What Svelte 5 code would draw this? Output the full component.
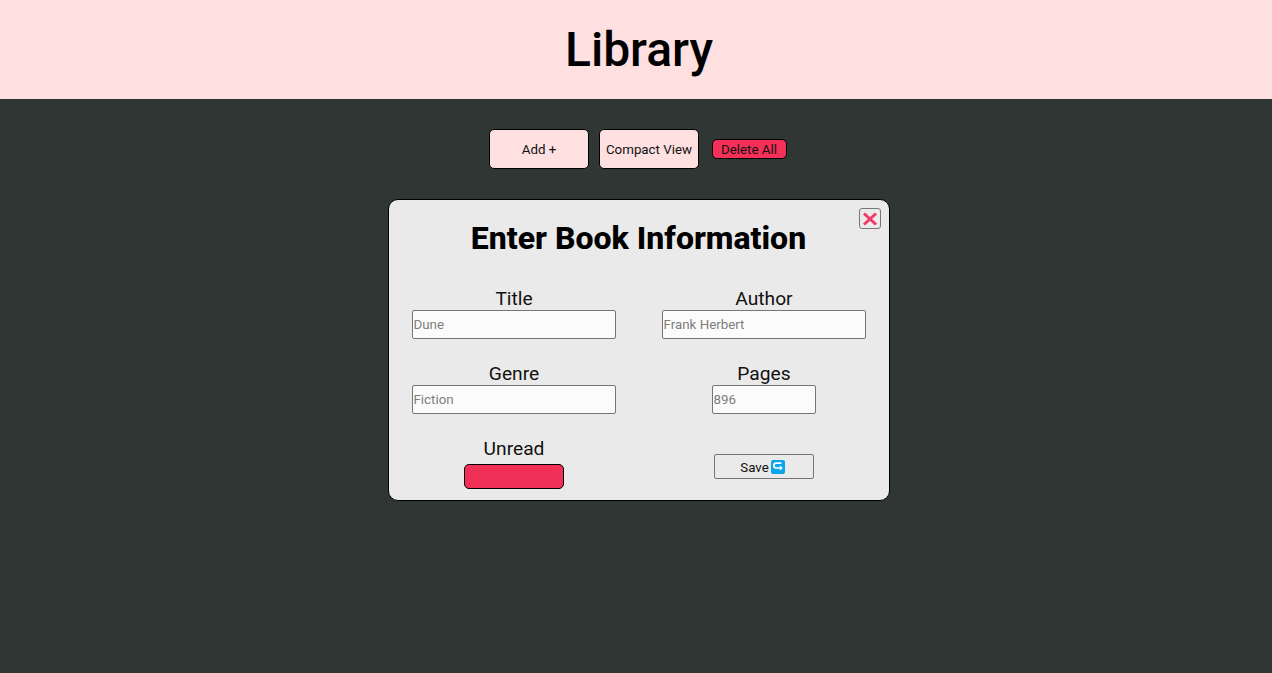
<script>
  const fields = [
    { label: "Title", placeholder: "Dune" },
    { label: "Author", placeholder: "Frank Herbert" },
    { label: "Genre", placeholder: "Fiction" },
    { label: "Pages", placeholder: "896", small: true }
  ];
</script>

<header class="banner">
  <h1>Library</h1>
</header>

<main class="content">
  <div class="toolbar">
    <button class="tool">Add +</button>
    <button class="tool">Compact View</button>
    <button class="danger">Delete All</button>
  </div>

  <form class="modal" on:submit|preventDefault>
    <button type="button" class="close" aria-label="Close">
      <svg viewBox="0 0 16 16" width="16" height="16">
        <path d="M2 2.5 14 13.5M14 2.5 2 13.5" stroke="#f4376a" stroke-width="3" fill="none" />
      </svg>
    </button>
    <h2>Enter Book Information</h2>
    <div class="grid">
      {#each fields as f}
        <div class="field">
          <label for={f.label}>{f.label}</label>
          <input id={f.label} class:small={f.small} placeholder={f.placeholder} />
        </div>
      {/each}
      <div class="field">
        <span class="label">Unread</span>
        <button type="button" class="status" aria-label="Unread"></button>
      </div>
      <div class="field end">
        <button class="save">
          Save
          <svg viewBox="0 0 14 14" width="14" height="14">
            <rect width="14" height="14" rx="2" fill="#0ba5ec" />
            <path d="M10.5 3.2H5.2a2.3 2.3 0 0 0 0 4.8h5.3" stroke="#fff" stroke-width="1.7" fill="none" />
            <path d="M8.8 5.6 11.8 8 8.8 10.6z" fill="#fff" />
          </svg>
        </button>
      </div>
    </div>
  </form>
</main>

<style>
  :global(body) {
    margin: 0;
    background: #303634;
    font-family: Roboto, sans-serif;
  }
  .banner {
    height: 99px;
    background: #ffe0e1;
    display: flex;
    align-items: center;
    justify-content: center;
    padding-left: 6px;
  }
  h1 {
    margin: 0;
    font-size: 48px;
    font-weight: 500;
    color: #000;
  }
  .content {
    display: flex;
    flex-direction: column;
    align-items: center;
    padding: 30px 0 0 5px;
  }
  .toolbar {
    display: flex;
    align-items: center;
    gap: 10px;
    margin: 0 2px 30px 0;
  }
  button {
    font-family: Roboto, sans-serif;
    font-size: 13.3333px;
    padding: 0;
    color: #111;
  }
  .tool {
    width: 100px;
    height: 40px;
    padding-left: 1px;
    background: #ffe0e1;
    border: 1px solid #000;
    border-radius: 5px;
  }
  .danger {
    width: 75px;
    height: 20px;
    margin-left: 3px;
    background: #f43058;
    border: 1px solid #000;
    border-radius: 5px;
  }
  .modal {
    position: relative;
    box-sizing: border-box;
    width: 502px;
    height: 302px;
    background: #eaeaea;
    border: 1px solid #000;
    border-radius: 10px;
    padding: 18px 23px 0;
  }
  .close {
    position: absolute;
    top: 8px;
    right: 8px;
    width: 22px;
    height: 21px;
    background: transparent;
    border: 1px solid #767676;
    border-radius: 3px;
    display: flex;
    align-items: center;
    justify-content: center;
  }
  h2 {
    margin: 0 0 27px;
    text-align: center;
    font-size: 32px;
    line-height: 41px;
    font-weight: 800;
    color: #000;
  }
  .grid {
    display: grid;
    grid-template-columns: 204px 204px;
    justify-content: space-between;
    row-gap: 22px;
  }
  .field {
    display: flex;
    flex-direction: column;
    align-items: center;
    height: 53px;
  }
  .end {
    justify-content: flex-start;
    padding-top: 18px;
    box-sizing: border-box;
    height: 53px;
  }
  label, .label {
    margin: 1px 0 -1px 1px;
    font-size: 19.2px;
    line-height: 24px;
    color: #111;
  }
  input {
    box-sizing: border-box;
    width: 204px;
    height: 29px;
    padding: 1px;
    background: #fbfbfb;
    border: 1px solid #767676;
    border-radius: 2px;
    font-family: Roboto, sans-serif;
    font-size: 13.3333px;
  }
  input.small {
    width: 104px;
  }
  input::placeholder {
    color: #7d7d7d;
  }
  .status {
    box-sizing: border-box;
    width: 100px;
    height: 25px;
    margin-top: 4px;
    background: #f03056;
    border: 1px solid #000;
    border-radius: 5px;
  }
  .save {
    box-sizing: border-box;
    width: 100px;
    height: 25px;
    padding: 1px 2px 0 0;
    display: flex;
    align-items: center;
    justify-content: center;
    gap: 2px;
    background: transparent;
    border: 1px solid #767676;
    border-radius: 2px;
  }
</style>
